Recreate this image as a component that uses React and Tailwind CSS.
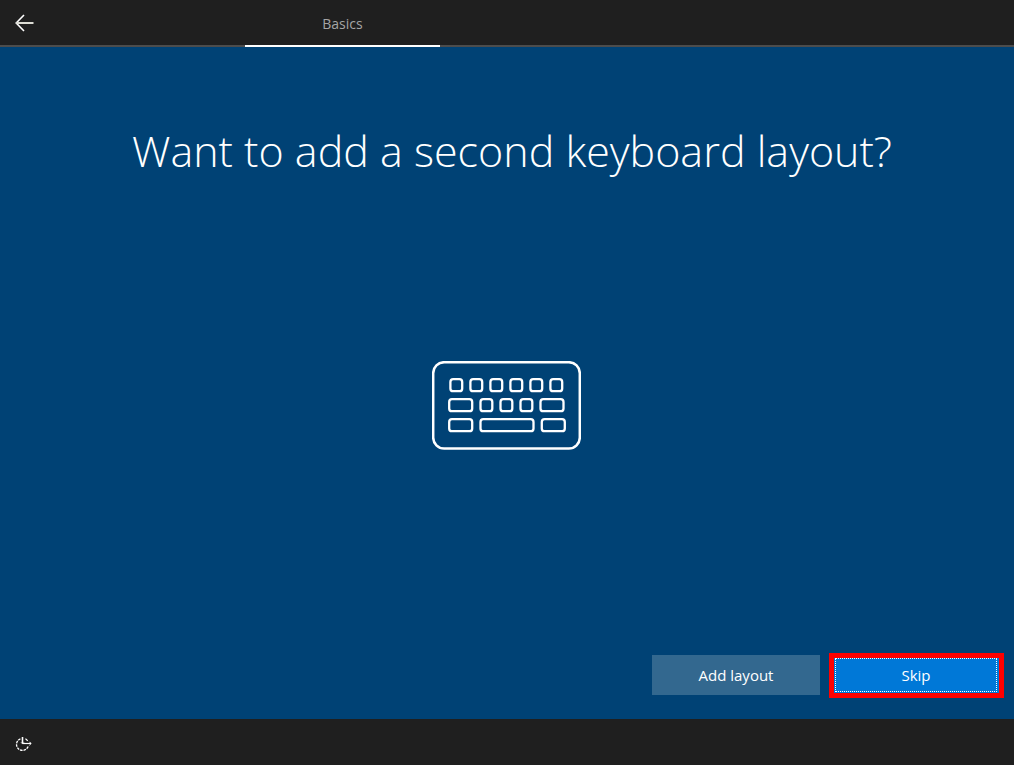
import React from "react";

const topRow = [18.4, 38.4, 58.4, 78.4, 98.4, 118.4];

const KeyboardIcon = () => (
  <svg width="149" height="89" viewBox="0 0 149 89" fill="none" stroke="#fff" strokeWidth="2.3" aria-hidden="true">
    <rect x="1.2" y="1.2" width="146.6" height="86.4" rx="11" strokeWidth="2.5" />
    {topRow.map(x => (
      <rect key={x} x={x} y="18.2" width="11.8" height="12" rx="2.8" />
    ))}
    <rect x="17.2" y="38.2" width="23" height="12" rx="2.8" />
    <rect x="48.5" y="38.2" width="11.8" height="12" rx="2.8" />
    <rect x="68.5" y="38.2" width="11.8" height="12" rx="2.8" />
    <rect x="88.5" y="38.2" width="11.8" height="12" rx="2.8" />
    <rect x="108.5" y="38.2" width="23" height="12" rx="2.8" />
    <rect x="17.2" y="58.2" width="23" height="12" rx="2.8" />
    <rect x="48.5" y="58.2" width="53" height="12" rx="2.8" />
    <rect x="109.8" y="58.2" width="23" height="12" rx="2.8" />
  </svg>
);

const BackIcon = () => (
  <svg width="20" height="18" viewBox="0 0 20 18" fill="none" stroke="#fff" strokeWidth="1.6" aria-hidden="true">
    <path d="M9 1 L1.2 9 L9 17" />
    <path d="M1.2 9 H18.5" stroke="#dcdcd4" strokeWidth="2" />
  </svg>
);

// Ease of access
const AccessIcon = () => (
  <svg width="18" height="16" viewBox="0 0 18 16" fill="none" stroke="#fff" strokeWidth="1.3" aria-hidden="true">
    <path d="M5.4 2.8 A6 6 0 1 0 13.4 9.6" strokeDasharray="2.6 0.9" />
    <path d="M10.4 2.8 A6 6 0 0 1 12.6 5" />
    <path d="M7.5 1 V7.5" strokeWidth="1.6" />
    <path d="M7.5 7.5 H16" strokeWidth="1.2" />
    <path d="M6 6.3 L7.5 7.8 L9 6.3" strokeWidth="0.8" />
    <path d="M14.4 5.8 L16.1 7.5 L14.4 9.2" strokeWidth="1" />
  </svg>
);

const App = () => {
  return (
    <div className="flex min-h-screen flex-col bg-[#004275] font-['Open_Sans','Noto_Sans',sans-serif] text-white">
      <header className="flex h-[47px] border-b-2 border-[#4c4c4c] bg-[#1f1f1f]">
        <button type="button" aria-label="Back" className="flex w-[50px] items-center pl-[15px]">
          <BackIcon />
        </button>
        <nav className="-mb-[2px] flex flex-1 pl-[195px]">
          <a href="#basics" className="flex w-[195px] items-center justify-center border-b-2 border-white pt-0.5 text-sm text-[#a5a5a5]">
            Basics
          </a>
        </nav>
      </header>

      <main className="flex flex-1 flex-col">
        <h1 className="mt-[72px] pr-4 pl-[26px] text-center text-[43px] leading-[64px] font-light">
          Want to add a second keyboard layout?
        </h1>
        <div className="flex flex-1 items-center justify-center pr-0.5">
          <KeyboardIcon />
        </div>
        <div className="flex items-start justify-end gap-[9px] pt-[26px] pr-[10px] pb-[21px]">
          <button type="button" className="mt-0.5 h-10 w-[168px] bg-[#33688f] text-[15px]">
            Add layout
          </button>
          <button type="button" className="h-[45px] w-[175px] border-[5px] border-[#ff0000] bg-[#0078d7] pr-0.5 pb-px pl-px text-[15px]">
            <span className="flex h-full items-center justify-center border border-dotted border-white">Skip</span>
          </button>
        </div>
      </main>

      <footer className="flex h-[46px] items-center bg-[#1f1f1f] pt-1 pl-[15px]">
        <button type="button" aria-label="Ease of access">
          <AccessIcon />
        </button>
      </footer>
    </div>
  );
};

export default App;
